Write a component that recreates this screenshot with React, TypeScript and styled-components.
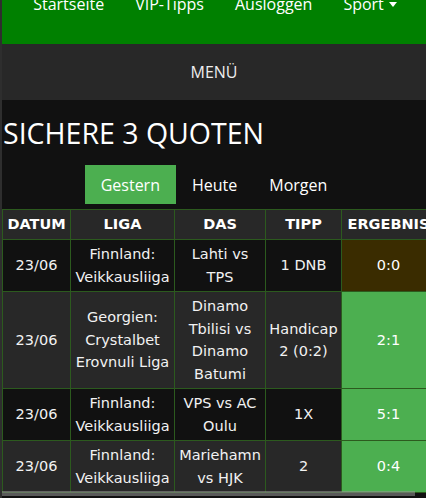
import React, { ReactElement } from 'react';
import styled, { createGlobalStyle } from 'styled-components';

const GlobalStyle = createGlobalStyle`
  html, body {
    margin: 0;
    padding: 0;
    background: #111111;
    overflow: hidden;
  }
  body {
    font-family: 'Open Sans', 'Noto Sans', sans-serif;
    color: #ffffff;
  }
`;

const Page = styled.div`
  border-left: 2px solid #2e2e2e;
  background: #111111;
  min-height: 498px;
`;

const TopNav = styled.nav`
  height: 44px;
  background: #008000;
  overflow: hidden;
  display: flex;
  justify-content: center;
  padding-left: 2px;
`;

const NavItem = styled.a<{ caret?: boolean }>`
  display: block;
  margin-top: -6px;
  padding: 0 15.5px;
  line-height: 20px;
  font-size: 16px;
  color: #ffffff;
  text-decoration: none;
  white-space: nowrap;

  ${({ caret }) => caret && `
    &::after {
      content: '';
      display: inline-block;
      margin-left: 5px;
      vertical-align: 3px;
      border-left: 4.5px solid transparent;
      border-right: 4.5px solid transparent;
      border-top: 5px solid #ffffff;
    }
  `}
`;

const MenuBar = styled.div`
  height: 56px;
  background: #282828;
  display: flex;
  align-items: center;
  justify-content: center;
  font-size: 16px;
  color: #eeeeee;
`;

const Title = styled.h1`
  margin: 13px 0 0 1px;
  font-size: 28.5px;
  font-weight: 400;
  line-height: 40px;
  color: #ffffff;
`;

const Tabs = styled.div`
  display: flex;
  justify-content: center;
  margin: 12px 0 5px;
`;

const Tab = styled.button<{ active?: boolean }>`
  border: none;
  height: 39px;
  padding: 0 16px;
  font-family: inherit;
  font-size: 16px;
  color: #ffffff;
  background: ${({ active }) => (active ? '#4caf50' : 'transparent')};
  cursor: pointer;
`;

const TableScroll = styled.div`
  position: relative;
  overflow: hidden;
`;

const ScrollThumb = styled.div`
  position: absolute;
  left: 0;
  bottom: 0;
  width: 413px;
  height: 5px;
  background: rgba(150, 150, 150, 0.55);
`;

const Table = styled.table`
  border-collapse: collapse;
  table-layout: fixed;
  width: 433px;
  margin-bottom: 3px;
  font-family: 'DejaVu Sans', Verdana, sans-serif;
  font-size: 14.5px;
  line-height: 22.5px;
  text-align: center;
`;

const Th = styled.th`
  background: #282828;
  border: 1px solid #2c5a1e;
  padding: 3px 2px 4px;
  line-height: 22px;
  font-weight: 700;
  color: #ffffff;
  white-space: nowrap;
  overflow: hidden;
`;

const Row = styled.tr<{ shaded?: boolean }>`
  background: ${({ shaded }) => (shaded ? '#282828' : '#111111')};
`;

const Td = styled.td`
  border: 1px solid #2c5a1e;
  padding: 3px 2px;
  color: #f2f2f2;
  vertical-align: middle;
`;

const ResultCell = styled(Td)<{ status: 'won' | 'open' }>`
  background: ${({ status }) => (status === 'won' ? '#4caf50' : '#3a2c00')};
  color: #ffffff;
`;

interface Tip {
  date: string;
  league: string;
  match: string;
  tip: string;
  result: string;
  status: 'won' | 'open';
}

const tips: Tip[] = [
  { date: '23/06', league: 'Finnland: Veikkausliiga', match: 'Lahti vs TPS', tip: '1 DNB', result: '0:0', status: 'open' },
  { date: '23/06', league: 'Georgien: Crystalbet Erovnuli Liga', match: 'Dinamo Tbilisi vs Dinamo Batumi', tip: 'Handicap 2 (0:2)', result: '2:1', status: 'won' },
  { date: '23/06', league: 'Finnland: Veikkausliiga', match: 'VPS vs AC Oulu', tip: '1X', result: '5:1', status: 'won' },
  { date: '23/06', league: 'Finnland: Veikkausliiga', match: 'Mariehamn vs HJK', tip: '2', result: '0:4', status: 'won' },
];

function App(): ReactElement {
  return (
    <>
      <GlobalStyle />
      <Page>
        <TopNav>
          <NavItem href="#">Startseite</NavItem>
          <NavItem href="#">VIP-Tipps</NavItem>
          <NavItem href="#">Ausloggen</NavItem>
          <NavItem href="#" caret>Sport</NavItem>
        </TopNav>
        <MenuBar>MENÜ</MenuBar>
        <Title>SICHERE 3 QUOTEN</Title>
        <Tabs>
          <Tab active>Gestern</Tab>
          <Tab>Heute</Tab>
          <Tab>Morgen</Tab>
        </Tabs>
        <TableScroll>
          <Table>
            <colgroup>
              <col style={{ width: 68 }} />
              <col style={{ width: 104 }} />
              <col style={{ width: 91 }} />
              <col style={{ width: 76 }} />
              <col style={{ width: 94 }} />
            </colgroup>
            <thead>
              <tr>
                <Th>DATUM</Th>
                <Th>LIGA</Th>
                <Th>DAS</Th>
                <Th>TIPP</Th>
                <Th>ERGEBNIS</Th>
              </tr>
            </thead>
            <tbody>
              {tips.map((x, i) => (
                <Row key={x.match} shaded={i % 2 === 1}>
                  <Td>{x.date}</Td>
                  <Td>{x.league}</Td>
                  <Td>{x.match}</Td>
                  <Td>{x.tip}</Td>
                  <ResultCell status={x.status}>{x.result}</ResultCell>
                </Row>
              ))}
            </tbody>
          </Table>
          <ScrollThumb />
        </TableScroll>
      </Page>
    </>
  );
}

export default App;
